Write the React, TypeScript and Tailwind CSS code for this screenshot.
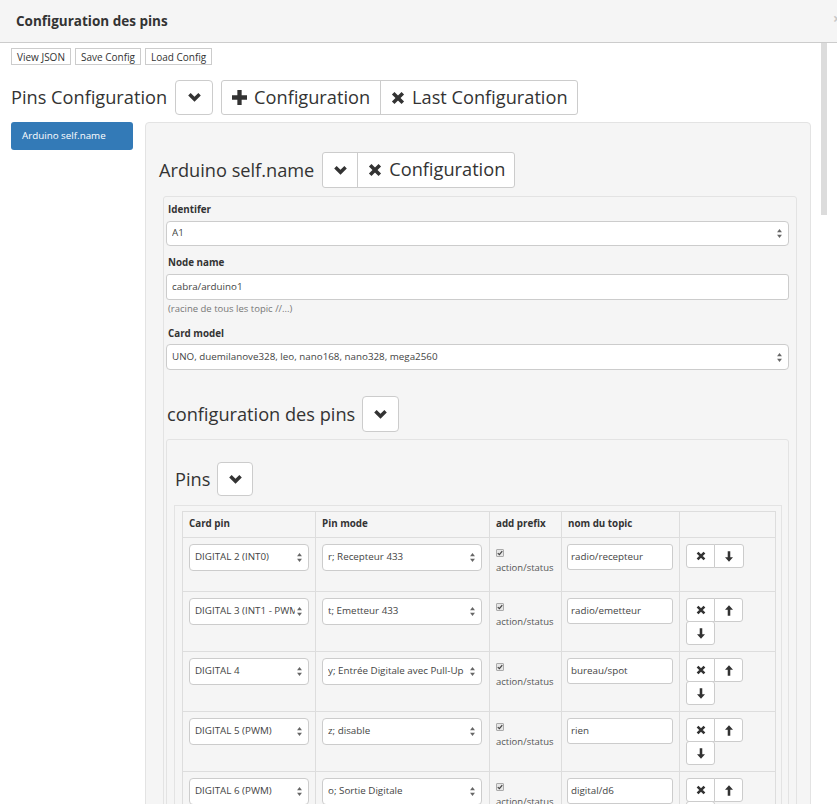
import React from "react";
import clsx from "clsx";

type Row = {
  pin: string;
  mode: string;
  topic: string;
  up: boolean;
};

const rows: Row[] = [
  { pin: "DIGITAL 2 (INT0)", mode: "r; Recepteur 433", topic: "radio/recepteur", up: false },
  { pin: "DIGITAL 3 (INT1 - PWM)", mode: "t; Emetteur 433", topic: "radio/emetteur", up: true },
  { pin: "DIGITAL 4", mode: "y; Entrée Digitale avec Pull-Up", topic: "bureau/spot", up: true },
  { pin: "DIGITAL 5 (PWM)", mode: "z; disable", topic: "rien", up: true },
  { pin: "DIGITAL 6 (PWM)", mode: "o; Sortie Digitale", topic: "digital/d6", up: true },
];

function Chevron() {
  return (
    <svg width="13" height="9" viewBox="0 0 14 10" className="fill-[#333]">
      <polygon points="0,2.7 2.7,0 7,4.3 11.3,0 14,2.7 7,9.7" />
    </svg>
  );
}

function Plus() {
  return (
    <svg width="15" height="15" viewBox="0 0 14 14" className="fill-[#333]">
      <path d="M5 0h4v5h5v4h-5v5h-4v-5h-5v-4h5z" />
    </svg>
  );
}

function Cross({ size = 14 }: { size?: number }) {
  return (
    <svg width={size} height={size} viewBox="0 0 14 14" className="stroke-[#333]">
      <path d="M2.2 2.2L11.8 11.8M11.8 2.2L2.2 11.8" strokeWidth="3.6" />
    </svg>
  );
}

function Arrow({ up }: { up: boolean }) {
  return (
    <svg width="8" height="11" viewBox="0 0 10 13" className={clsx("fill-[#333]", !up && "rotate-180")}>
      <polygon points="5,0 10,5.5 6.6,5.5 6.6,13 3.4,13 3.4,5.5 0,5.5" />
    </svg>
  );
}

function SelectArrows() {
  return (
    <svg width="5" height="9" viewBox="0 0 6 11" className="shrink-0 fill-[#666]">
      <polygon points="3,0 6,4 0,4" />
      <polygon points="0,7 6,7 3,11" />
    </svg>
  );
}

function FakeSelect({ value, className }: { value: string; className?: string }) {
  return (
    <div
      className={clsx(
        "flex items-center gap-[2px] rounded-[4px] border border-[#ccc] bg-white pl-[5px] pr-[6px] text-[9.8px] text-[#444]",
        className
      )}
    >
      <span className="min-w-0 flex-1 overflow-hidden whitespace-nowrap">{value}</span>
      <SelectArrows />
    </div>
  );
}

function ChevronButton({ className }: { className?: string }) {
  return (
    <div className={clsx("flex items-center justify-center rounded-[4px] border border-[#ccc] bg-white", className)}>
      <Chevron />
    </div>
  );
}

function CheckBox() {
  return (
    <span className="flex h-[8px] w-[8px] items-center justify-center rounded-[1px] border border-[#aaa] bg-[#e6e6e6]">
      <svg width="6" height="6" viewBox="0 0 8 8" className="fill-none stroke-[#444]">
        <path d="M1 4.2L3.2 6.3L7 1.5" strokeWidth="1.6" />
      </svg>
    </span>
  );
}

function Actions({ up }: { up: boolean }) {
  const btn = "flex h-[24px] w-[29px] items-center justify-center border border-[#ccc] bg-white";
  return (
    <div className="flex w-[82px] flex-wrap">
      <div className={clsx(btn, "rounded-l-[3px]")}>
        <Cross size={10} />
      </div>
      {up ? (
        <>
          <div className={clsx(btn, "-ml-px rounded-r-[3px]")}>
            <Arrow up />
          </div>
          <div className={clsx(btn, "-mt-px w-[29px] rounded-[3px]")}>
            <Arrow up={false} />
          </div>
        </>
      ) : (
        <div className={clsx(btn, "-ml-px w-[30px] rounded-r-[3px]")}>
          <Arrow up={false} />
        </div>
      )}
    </div>
  );
}

export default function App() {
  return (
    <div className="relative h-[804px] w-[837px] overflow-hidden bg-white font-['Open_Sans','Noto_Sans',sans-serif] text-[#333]">
      {/* modal header */}
      <div className="relative flex h-[43px] items-center border-b border-[#ccc] bg-[#f5f5f5] pl-[16px]">
        <h4 className="text-[13.5px] font-bold text-[#333]">Configuration des pins</h4>
        <span className="absolute right-[-4px] top-[12px] text-[14px] font-bold leading-none text-[#c8c8c8]">×</span>
      </div>
      {/* scroll thumb */}
      <div className="absolute left-[821px] top-[43px] h-[172px] w-[6px] bg-[#dcdcdc]" />

      <div className="pl-[11px] pr-[26px] pt-[5px]">
        <div className="flex gap-[4px]">
          {["View JSON", "Save Config", "Load Config"].map((b) => (
            <div key={b} className="flex h-[17px] items-center border border-[#ccc] bg-white px-[5px] text-[10px] leading-none">
              {b}
            </div>
          ))}
        </div>

        <div className="mt-[15px] flex h-[35px] items-center">
          <h3 className="mr-[8px] text-[18.2px] leading-none">Pins Configuration</h3>
          <ChevronButton className="h-[35px] w-[38px]" />
          <div className="ml-[8px] flex h-[35px] rounded-[3px] border border-[#ccc] bg-white text-[18.2px]">
            <div className="flex items-center gap-[7px] border-r border-[#ccc] pl-[10px] pr-[10px]">
              <Plus />
              <span>Configuration</span>
            </div>
            <div className="flex items-center gap-[7px] pl-[10px] pr-[9px]">
              <Cross size={14} />
              <span>Last Configuration</span>
            </div>
          </div>
        </div>

        <div className="mt-[7px] flex gap-[12px]">
          <div className="flex h-[28px] w-[122px] shrink-0 items-center rounded-[3px] bg-[#337ab7] pl-[11px] text-[9.8px] text-white">
            Arduino self.name
          </div>

          <div className="h-[700px] w-[666px] rounded-[4px] border border-[#e3e3e3] bg-[#f5f5f5] pl-[13px] pr-[13px] pt-[29px]">
            <div className="flex h-[36px] items-center">
              <h3 className="mr-[8px] text-[18.2px] leading-none">Arduino self.name</h3>
              <div className="flex h-[36px] rounded-[3px] border border-[#ccc] bg-white text-[18.2px]">
                <div className="flex w-[35px] items-center justify-center border-r border-[#ccc]">
                  <Chevron />
                </div>
                <div className="flex items-center gap-[7px] pl-[10px] pr-[9px]">
                  <Cross size={14} />
                  <span>Configuration</span>
                </div>
              </div>
            </div>

            <div className="ml-[4px] mt-[8px] h-[700px] rounded-[3px] border border-[#e3e3e3] bg-[#f5f5f5] pl-[2px] pr-[7px] pt-[6px]">
              <label className="block pl-[2px] text-[9.8px] font-bold leading-[14px]">Identifer</label>
              <FakeSelect value="A1" className="mt-[4px] h-[25px]" />

              <label className="mt-[10px] block pl-[2px] text-[9.8px] font-bold leading-[14px]">Node name</label>
              <div className="mt-[4px] flex h-[26px] items-center rounded-[3px] border border-[#ccc] bg-white pl-[5px] text-[9.8px] text-[#444]">
                cabra/arduino1
              </div>
              <p className="mt-[3px] pl-[2px] text-[9.5px] leading-[12px] text-[#777]">(racine de tous les topic //...)</p>

              <label className="mt-[12px] block pl-[2px] text-[9.8px] font-bold leading-[14px]">Card model</label>
              <FakeSelect value="UNO, duemilanove328, leo, nano168, nano328, mega2560" className="mt-[3px] h-[26px]" />

              <div className="mt-[26px] flex h-[36px] items-center pl-[1px]">
                <h3 className="mr-[7px] text-[18.2px] leading-none">configuration des pins</h3>
                <ChevronButton className="h-[36px] w-[37px]" />
              </div>

              <div className="mt-[7px] h-[500px] rounded-[3px] border border-[#e3e3e3] bg-[#f5f5f5] pl-[7px] pr-[6px] pt-[22px]">
                <div className="flex h-[34px] items-center pl-[1px]">
                  <h3 className="mr-[7px] text-[18.2px] leading-none">Pins</h3>
                  <ChevronButton className="h-[34px] w-[36px]" />
                </div>

                <div className="mt-[9px] h-[400px] border border-[#e3e3e3] pl-[7px] pr-[6px] pt-[5px]">
                  <table className="w-[593px] table-fixed border-collapse text-left text-[9.8px]">
                    <colgroup>
                      <col className="w-[133px]" />
                      <col className="w-[174px]" />
                      <col className="w-[72px]" />
                      <col className="w-[118px]" />
                      <col className="w-[96px]" />
                    </colgroup>
                    <thead>
                      <tr className="h-[26px]">
                        {["Card pin", "Pin mode", "add prefix", "nom du topic", ""].map((h, i) => (
                          <th key={i} className="border border-[#ddd] px-[6px] align-middle font-bold">
                            {h}
                          </th>
                        ))}
                      </tr>
                    </thead>
                    <tbody>
                      {rows.map((r, i) => (
                        <tr key={i} className={i === 0 ? "h-[54px]" : "h-[60px]"}>
                          <td className="border border-[#ddd] px-[6px] pt-[6px] align-top">
                            <FakeSelect value={r.pin} className="h-[27px] w-[120px]" />
                          </td>
                          <td className="border border-[#ddd] px-[6px] pt-[6px] align-top">
                            <FakeSelect value={r.mode} className="h-[27px] w-[160px]" />
                          </td>
                          <td className="border border-[#ddd] px-[6px] pt-[6px] align-top">
                            <div className="mt-[5px]">
                              <CheckBox />
                            </div>
                            <div className="mt-[4px] text-[9.5px] leading-[13px] text-[#555]">action/status</div>
                          </td>
                          <td className="border border-[#ddd] px-[5px] pt-[6px] align-top">
                            <div className="flex h-[26px] w-[106px] items-center rounded-[3px] border border-[#ccc] bg-white pl-[3px] text-[#444]">
                              {r.topic}
                            </div>
                          </td>
                          <td className="border border-[#ddd] px-[6px] pb-[6px] pt-[6px] align-top">
                            <Actions up={r.up} />
                          </td>
                        </tr>
                      ))}
                    </tbody>
                  </table>
                </div>
              </div>
            </div>
          </div>
        </div>
      </div>
    </div>
  );
}
